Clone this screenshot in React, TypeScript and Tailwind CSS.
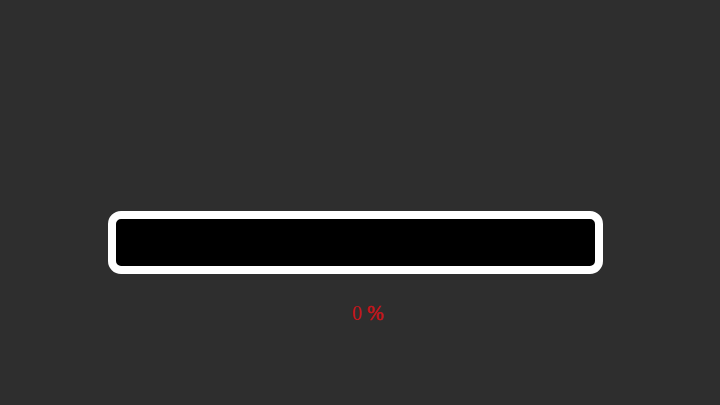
export default function App() {
  return (
    <div className="w-[720px] h-[405px] bg-[#2e2e2e] flex flex-col overflow-hidden">
      <div className="ml-[108px] mt-[211px] w-[495px] h-[63px] rounded-[13px] border-[8px] border-white bg-black" />
      <div
        className="ml-[352px] mt-[28px] text-[20px] leading-[23px] text-[#c8151b]"
        style={{ fontFamily: '"Liberation Serif", serif' }}
      >
        0 <span className="[-webkit-text-stroke:0.5px_#c8151b]">%</span>
      </div>
    </div>
  );
}
